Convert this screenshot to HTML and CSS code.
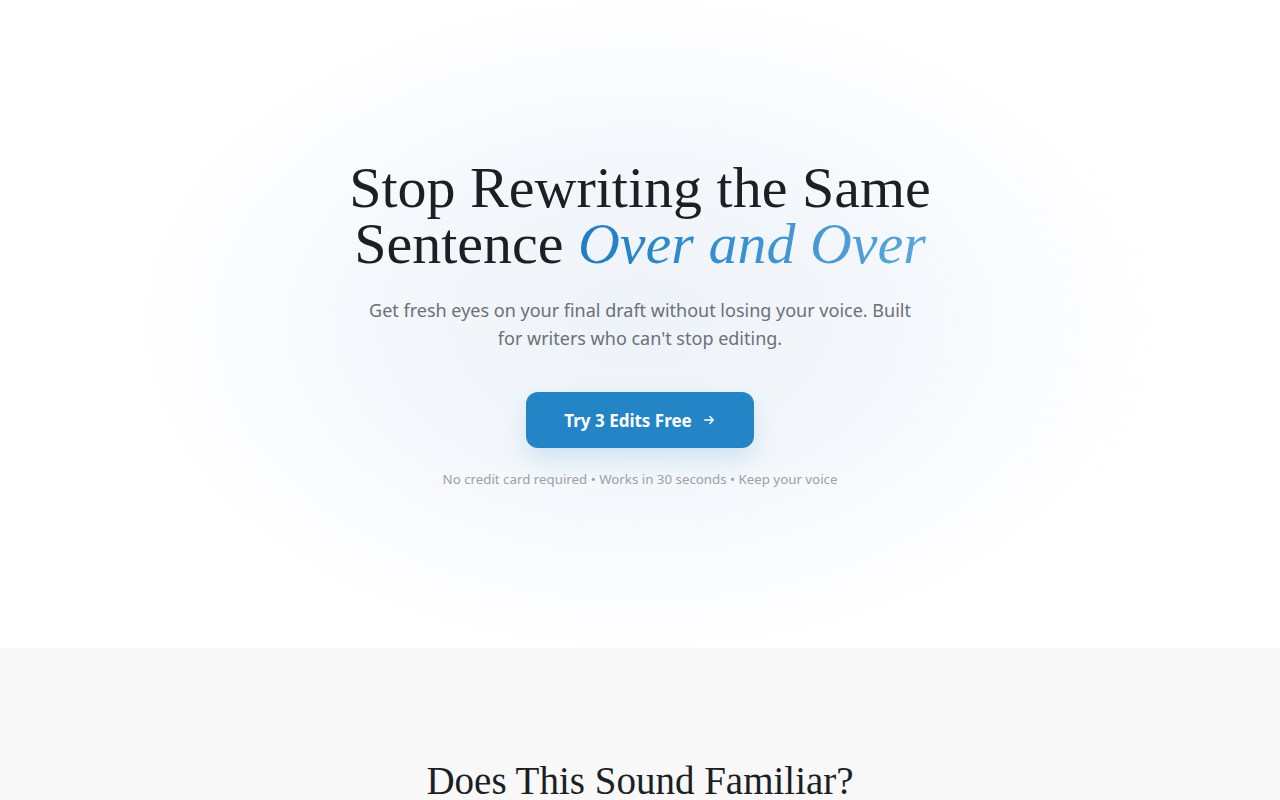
FILE: index.html
```html
<!DOCTYPE html>
<html lang="en">
<head>
    <meta charset="UTF-8">
    <meta name="viewport" content="width=device-width, initial-scale=1.0">
    <title>Fresh Eyes for Your Final Draft</title>
    <link rel="stylesheet" href="styles.css">
</head>
<body>
    <section class="hero">
        <div class="hero-inner">
            <h1 class="hero-title">Stop Rewriting the Same Sentence <em class="accent">Over and Over</em></h1>
            <p class="hero-sub">Get fresh eyes on your final draft without losing your voice. Built for writers who can't stop editing.</p>
            <a href="#" class="cta">Try 3 Edits Free
                <svg class="cta-arrow" viewBox="0 0 16 16" width="14" height="14" fill="none" stroke="currentColor" stroke-width="1.6" stroke-linecap="round" stroke-linejoin="round">
                    <path d="M3 8h10M9 4l4 4-4 4"/>
                </svg>
            </a>
            <p class="hero-note">No credit card required &bull; Works in 30 seconds &bull; Keep your voice</p>
        </div>
    </section>

    <section class="problems">
        <h2 class="section-title">Does This Sound Familiar?</h2>
    </section>
</body>
</html>
```

FILE: styles.css
```css
body {
    margin: 0;
    font-family: "Noto Sans", "Open Sans", sans-serif;
    color: #1c1f24;
    background-color: #fff;
}
.hero {
    height: 648px;
    display: flex;
    justify-content: center;
    align-items: center;
    background: radial-gradient(ellipse 520px 340px at 50% 50%, #eef3f9 0%, #f3f7fb 45%, #fbfcfe 80%, #fff 100%);
}
.hero-inner {
    text-align: center;
    max-width: 640px;
}
.hero-title {
    font-family: "Liberation Serif", serif;
    font-weight: 400;
    font-size: 58px;
    line-height: 56px;
    margin: 0 auto 24px;
    width: 630px;
    color: #1c1f24;
}
.accent {
    font-style: italic;
    background: linear-gradient(90deg, #1f7ec4, #5aa6da);
    -webkit-background-clip: text;
    background-clip: text;
    color: transparent;
}
.hero-sub {
    font-size: 18px;
    line-height: 28px;
    color: #6b7079;
    margin: 0 auto 40px;
    max-width: 565px;
}
.cta {
    display: inline-flex;
    align-items: center;
    gap: 10px;
    background-color: #2385c6;
    color: #fff;
    text-decoration: none;
    font-weight: 700;
    font-size: 17px;
    padding: 0 38px;
    height: 56px;
    border-radius: 12px;
    box-shadow: 0 10px 24px rgba(35, 133, 198, 0.18);
}
.hero-note {
    font-size: 13.3px;
    color: #9aa0a8;
    margin: 22px 0 0;
}
.problems {
    background-color: #f8f8f8;
    padding: 110px 0 80px;
    text-align: center;
}
.section-title {
    font-family: "Liberation Serif", serif;
    font-weight: 400;
    font-size: 39px;
    margin: 0;
    color: #1c1f24;
}
```
